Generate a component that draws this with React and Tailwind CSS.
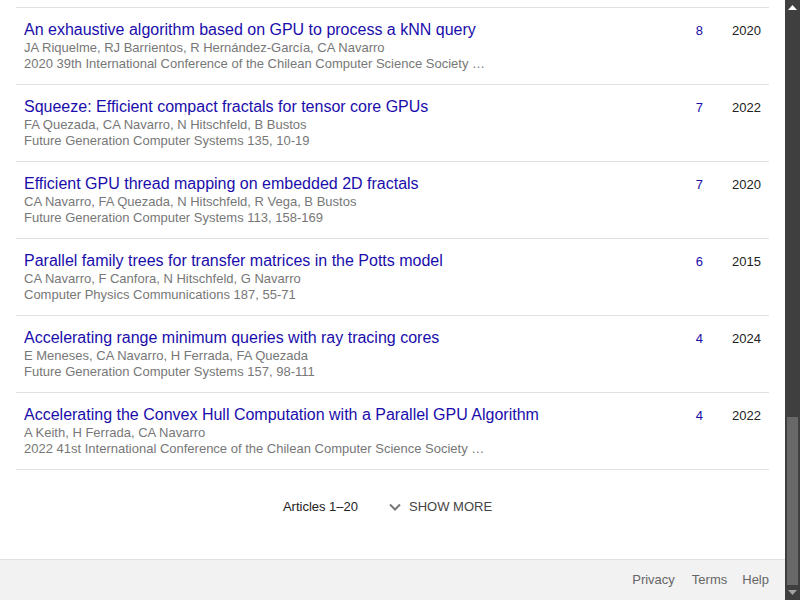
import React from 'react';

const articles = [
  {
    title: 'An exhaustive algorithm based on GPU to process a kNN query',
    authors: 'JA Riquelme, RJ Barrientos, R Hernández-García, CA Navarro',
    venue: '2020 39th International Conference of the Chilean Computer Science Society …',
    cited: 8,
    year: 2020
  },
  {
    title: 'Squeeze: Efficient compact fractals for tensor core GPUs',
    authors: 'FA Quezada, CA Navarro, N Hitschfeld, B Bustos',
    venue: 'Future Generation Computer Systems 135, 10-19',
    cited: 7,
    year: 2022
  },
  {
    title: 'Efficient GPU thread mapping on embedded 2D fractals',
    authors: 'CA Navarro, FA Quezada, N Hitschfeld, R Vega, B Bustos',
    venue: 'Future Generation Computer Systems 113, 158-169',
    cited: 7,
    year: 2020
  },
  {
    title: 'Parallel family trees for transfer matrices in the Potts model',
    authors: 'CA Navarro, F Canfora, N Hitschfeld, G Navarro',
    venue: 'Computer Physics Communications 187, 55-71',
    cited: 6,
    year: 2015
  },
  {
    title: 'Accelerating range minimum queries with ray tracing cores',
    authors: 'E Meneses, CA Navarro, H Ferrada, FA Quezada',
    venue: 'Future Generation Computer Systems 157, 98-111',
    cited: 4,
    year: 2024
  },
  {
    title: 'Accelerating the Convex Hull Computation with a Parallel GPU Algorithm',
    authors: 'A Keith, H Ferrada, CA Navarro',
    venue: '2022 41st International Conference of the Chilean Computer Science Society …',
    cited: 4,
    year: 2022
  }
];

const ArticleRow = ({ article }) => (
  <div className="flex border-t border-[#e0e0e0]">
    <div className="flex-1 pl-2 pt-3 pb-3 min-w-0">
      <a className="block text-[16px] leading-5 text-[#1a0dab]">{article.title}</a>
      <div className="text-[13px] leading-4 text-[#777777]">{article.authors}</div>
      <div className="text-[13px] leading-4 text-[#777777]">{article.venue}</div>
    </div>
    <div className="w-[48px] pt-[13px] pr-[4px] text-right text-[13px] leading-5 text-[#1a0dab]">
      {article.cited}
    </div>
    <div className="w-[62px] pt-[13px] pr-2 text-right text-[13px] leading-5 text-[#222222]">
      {article.year}
    </div>
  </div>
);

export default function App() {
  return (
    <div className="flex h-screen w-full overflow-hidden bg-white font-['Liberation_Sans',Arial,sans-serif]">
      <div className="flex flex-1 flex-col">
        <div className="flex-1 px-4 pt-[7px]">
          {articles.map((a) => (
            <ArticleRow key={a.title} article={a} />
          ))}
          <div className="border-t border-[#e0e0e0]" />
          <div className="flex items-center justify-center pt-[29px] pr-[10px] text-[13px] leading-4">
            <span className="text-[#222222]">Articles 1–20</span>
            <button className="ml-[30px] flex items-center text-[#444444]">
              <svg width="14" height="14" viewBox="0 0 14 14" className="mr-[7px]">
                <path d="M2 4.5 L7 9.5 L12 4.5" fill="none" stroke="#777777" strokeWidth="2" />
              </svg>
              SHOW MORE
            </button>
          </div>
        </div>
        <div className="flex h-[41px] items-center justify-end border-t border-[#e0e0e0] bg-[#f2f2f2] pr-4 text-[13px] text-[#666666]">
          <a className="mr-[17px]">Privacy</a>
          <a className="mr-[15px]">Terms</a>
          <a>Help</a>
        </div>
      </div>
      <div className="flex w-[15px] flex-col bg-[#3f3f3f]">
        <div className="flex h-[15px] items-center justify-center">
          <svg width="9" height="5" viewBox="0 0 9 5">
            <path d="M0 5 L4.5 0 L9 5 Z" fill="#ffffff" />
          </svg>
        </div>
        <div className="flex-1 flex flex-col justify-end px-[2px]">
          <div className="h-[168px] bg-[#686868]" />
        </div>
        <div className="flex h-[15px] items-center justify-center">
          <svg width="9" height="5" viewBox="0 0 9 5">
            <path d="M0 0 L9 0 L4.5 5 Z" fill="#a3a3a3" />
          </svg>
        </div>
      </div>
    </div>
  );
}
